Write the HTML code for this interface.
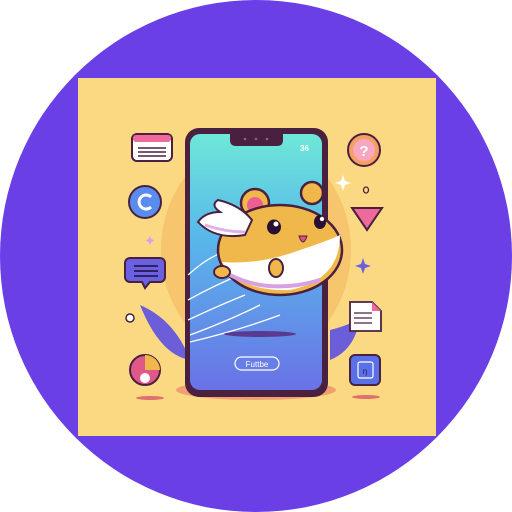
<!DOCTYPE html>
<html><head><style>
html,body{margin:0;padding:0;width:512px;height:512px;background:#fff;overflow:hidden}
svg{display:block}
</style></head><body>
<svg width="512" height="512" viewBox="0 0 512 512" xmlns="http://www.w3.org/2000/svg">
<defs>
<linearGradient id="scr" x1="0" y1="0" x2="0" y2="1">
<stop offset="0" stop-color="#6ee8d8"/><stop offset="0.4" stop-color="#58b8ea"/><stop offset="1" stop-color="#6a72e6"/>
</linearGradient>
</defs>
<circle cx="256" cy="256" r="256" fill="#6a3fe6"/>
<rect x="78" y="78" width="358" height="358" fill="#fbd983"/>
<!-- blobs behind phone -->
<ellipse cx="256" cy="250" rx="95" ry="110" fill="#f7c56d"/>
<ellipse cx="256" cy="390" rx="80" ry="10" fill="#f0a070"/>
<!-- leaves -->
<path d="M140 305 Q175 320 190 360 Q160 355 140 305Z" fill="#6b5ed8"/>
<path d="M330 330 Q350 325 360 318 Q355 350 330 360Z" fill="#6b5ed8"/>
<!-- phone -->
<rect x="185" y="128" width="143" height="269" rx="14" fill="#4a2040"/>
<rect x="190" y="134" width="132" height="256" rx="10" fill="url(#scr)"/>
<path d="M230 134 h53 v6 q0 6 -6 6 h-41 q-6 0 -6 -6z" fill="#4a2040"/>
<circle cx="245" cy="139" r="1.3" fill="#8a6080"/><circle cx="256" cy="139" r="1.3" fill="#8a6080"/><circle cx="267" cy="139" r="1.3" fill="#8a6080"/>
<text x="300" y="151" font-family="Liberation Sans,sans-serif" font-size="8" fill="#fff" font-weight="bold">36</text>
<!-- speed lines -->
<g stroke="#fff" stroke-width="1.3" fill="none">
<path d="M188 275 Q210 255 230 250"/><path d="M188 300 Q215 285 240 275"/><path d="M188 320 Q220 305 245 295"/><path d="M190 335 Q230 320 260 305"/><path d="M190 342 Q240 330 280 315"/>
</g>
<ellipse cx="260" cy="334" rx="36" ry="3" fill="#5a3a90"/>
<rect x="235" y="357" width="44" height="13" rx="6.5" fill="none" stroke="#fff" stroke-width="1.2"/>
<text x="257" y="367" text-anchor="middle" font-family="Liberation Sans,sans-serif" font-size="8" fill="#fff">Futtbe</text>
<!-- hamster -->
<circle cx="255" cy="203" r="14" fill="#f0b84a" stroke="#4a2040" stroke-width="2.5"/>
<circle cx="255" cy="205" r="8" fill="#ef5e90"/>
<circle cx="312" cy="193" r="11" fill="#f0b84a" stroke="#4a2040" stroke-width="2.5"/>
<ellipse cx="280" cy="250" rx="62" ry="45" fill="#f0b84a" stroke="#4a2040" stroke-width="2.5"/>
<path d="M222 262 Q260 265 300 250 Q330 240 340 235 Q340 280 290 290 Q240 292 222 262Z" fill="#fff"/>
<path d="M230 275 Q270 295 320 280" stroke="#d8a0e0" stroke-width="4" fill="none"/>
<ellipse cx="274" cy="227" rx="7" ry="7.5" fill="#2a1030"/><circle cx="276" cy="224" r="2.5" fill="#fff"/>
<ellipse cx="320" cy="222" rx="6" ry="7" fill="#2a1030"/><circle cx="322" cy="219" r="2.2" fill="#fff"/>
<path d="M299 236 q4 12 8 0z" fill="#e05080" stroke="#4a2040" stroke-width="1"/>
<ellipse cx="276" cy="268" rx="7" ry="9" fill="#f0b84a" stroke="#4a2040" stroke-width="2"/>
<ellipse cx="222" cy="272" rx="8" ry="6" fill="#f0b84a" stroke="#4a2040" stroke-width="2"/>
<!-- wing -->
<path d="M245 235 Q215 240 198 222 Q205 212 220 212 Q210 205 218 200 Q240 205 252 220Z" fill="#fff" stroke="#4a2040" stroke-width="2"/>
<path d="M205 225 Q225 232 245 232" stroke="#e0b0e8" stroke-width="3" fill="none"/>
<!-- left icons -->
<rect x="132" y="134" width="40" height="27" rx="5" fill="#fff" stroke="#4a2040" stroke-width="2"/>
<rect x="133" y="135" width="38" height="7" rx="3" fill="#ef6a9a"/>
<g stroke="#4a2040" stroke-width="1.5"><line x1="138" y1="148" x2="166" y2="148"/><line x1="138" y1="152" x2="166" y2="152"/><line x1="138" y1="156" x2="166" y2="156"/></g>
<circle cx="145" cy="202" r="16" fill="#5a8cf0" stroke="#4a2040" stroke-width="2"/>
<path d="M151 197 a7 7 0 1 0 0 10" stroke="#fff" stroke-width="3" fill="none"/>
<path d="M130 258 h30 a5 5 0 0 1 5 5 v14 a5 5 0 0 1 -5 5 h-10 l-5 6 l-3 -6 h-12 a5 5 0 0 1 -5 -5 v-14 a5 5 0 0 1 5 -5z" fill="#6a60e0" stroke="#4a2040" stroke-width="2"/>
<g stroke="#2a1850" stroke-width="1.8"><line x1="134" y1="266" x2="158" y2="266"/><line x1="134" y1="271" x2="158" y2="271"/><line x1="134" y1="276" x2="158" y2="276"/></g>
<circle cx="130" cy="318" r="4" fill="#fff" stroke="#4a2040" stroke-width="1.5"/>
<circle cx="145" cy="370" r="15" fill="#e05888" stroke="#4a2040" stroke-width="2"/>
<path d="M145 370 L145 355 A15 15 0 0 1 160 370Z" fill="#f0b84a"/>
<circle cx="145" cy="378" r="5" fill="#fff"/>
<ellipse cx="150" cy="398" rx="14" ry="2" fill="#e07070"/>
<!-- right icons -->
<circle cx="364" cy="150" r="16" fill="#f5a060" stroke="#4a2040" stroke-width="2"/>
<circle cx="364" cy="150" r="11" fill="#f7a8c0"/>
<text x="364" y="156" text-anchor="middle" font-family="Liberation Sans,sans-serif" font-size="15" font-weight="bold" fill="#fff">?</text>
<path d="M352 208 h30 l-15 22z" fill="#ef6a9a" stroke="#4a2040" stroke-width="2"/>
<ellipse cx="366" cy="190" rx="2.5" ry="3" fill="none" stroke="#4a2040" stroke-width="1.3"/>
<path d="M343 175 l2 6 l6 2 l-6 2 l-2 6 l-2 -6 l-6 -2 l6 -2z" fill="#fff"/>
<path d="M363 258 l2 6 l6 2 l-6 2 l-2 6 l-2 -6 l-6 -2 l6 -2z" fill="#6a60e0"/>
<path d="M350 302 h22 l9 9 v20 h-31z" fill="#fff" stroke="#4a2040" stroke-width="1.8"/>
<path d="M372 302 v9 h9z" fill="#ef6a9a"/>
<g stroke="#4a2040" stroke-width="1.3"><line x1="354" y1="313" x2="372" y2="313"/><line x1="354" y1="318" x2="372" y2="318"/><line x1="354" y1="323" x2="372" y2="323"/></g>
<rect x="350" y="355" width="30" height="30" rx="5" fill="#5a70e8" stroke="#4a2040" stroke-width="2"/>
<rect x="358" y="362" width="15" height="16" rx="2" fill="none" stroke="#fff" stroke-width="1.2"/>
<text x="365" y="374" text-anchor="middle" font-family="Liberation Sans,sans-serif" font-size="8" fill="#2a1850">ŋ</text>
<ellipse cx="366" cy="397" rx="14" ry="2" fill="#e07070"/>
<path d="M150 236 l1.5 3 l3 1.5 l-3 1.5 l-1.5 3 l-1.5 -3 l-3 -1.5 l3 -1.5z" fill="#d8a0f0"/>
</svg>
</body></html>
